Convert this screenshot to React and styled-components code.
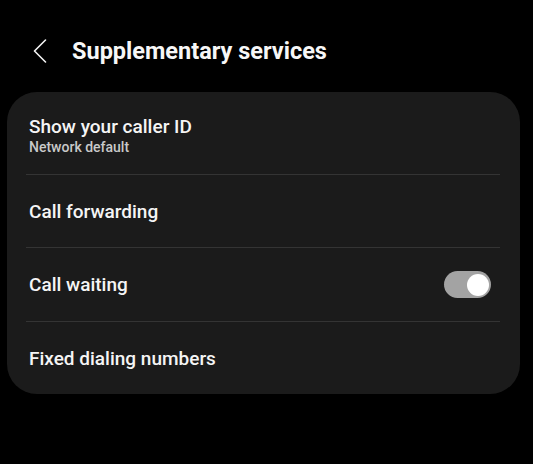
import React, { useState } from 'react'
import styled, { createGlobalStyle } from 'styled-components'

const GlobalStyle = createGlobalStyle`
    html, body {
        margin: 0;
        padding: 0;
        background: #000;
    }
    body {
        font-family: Roboto, 'Noto Sans', sans-serif;
        color: #f5f5f5;
    }
`;

const Screen = styled.div`
    width: 533px;
    height: 464px;
    background: #000;
    display: flex;
    flex-direction: column;
    padding: 0 13px 0 7px;
    box-sizing: border-box;
`;

const Header = styled.div`
    display: flex;
    align-items: center;
    height: 92px;
    padding: 10px 0 0 26px;
    box-sizing: border-box;
`;

const BackButton = styled.button`
    background: none;
    border: none;
    padding: 0;
    margin: 0 25px 0 0;
    display: flex;
    align-items: center;
    color: #f2f2f2;
`;

const Title = styled.h1`
    margin: 0;
    font-size: 23.5px;
    font-weight: 700;
    color: #f7f7f7;
`;

const Card = styled.div`
    background: #1b1b1b;
    border-radius: 30px;
    display: flex;
    flex-direction: column;
    padding: 0 20px 0 19px;
`;

const Row = styled.div`
    display: flex;
    align-items: center;
    justify-content: space-between;
    height: ${p => p.height || 73}px;
    border-top: ${p => (p.first ? 'none' : '1px solid #343434')};
    box-sizing: border-box;
    padding: 0 0 0 3px;
`;

const Texts = styled.div`
    display: flex;
    flex-direction: column;
    gap: 1px;
    padding-top: ${p => p.pad || 0}px;
`;

const Label = styled.span`
    font-size: 19px;
    font-weight: 500;
    color: #f5f5f5;
`;

const Sub = styled.span`
    font-size: 14px;
    font-weight: 500;
    color: #c9c9c9;
`;

const Track = styled.div`
    width: 47px;
    height: 27px;
    margin-right: 9px;
    border-radius: 14px;
    background: ${p => (p.on ? '#a3a3a3' : '#555')};
    display: flex;
    align-items: center;
    justify-content: ${p => (p.on ? 'flex-end' : 'flex-start')};
    padding: 0 2px;
    box-sizing: border-box;
    cursor: pointer;
`;

const Knob = styled.div`
    width: 22px;
    height: 22px;
    border-radius: 50%;
    background: #fff;
`;

const Chevron = () => (
    <svg width="14" height="24" viewBox="0 0 14 24" fill="none">
        <path d="M12.5 1 L1.5 12 L12.5 23" stroke="#f2f2f2" strokeWidth="1.6" strokeLinecap="round" strokeLinejoin="round" />
    </svg>
)

export default function App() {
    const [waiting, setWaiting] = useState(true)
    return (
        <>
            <GlobalStyle />
            <Screen>
                <Header>
                    <BackButton><Chevron /></BackButton>
                    <Title>Supplementary services</Title>
                </Header>
                <Card>
                    <Row first height={82}>
                        <Texts pad={4}>
                            <Label>Show your caller ID</Label>
                            <Sub>Network default</Sub>
                        </Texts>
                    </Row>
                    <Row>
                        <Label>Call forwarding</Label>
                    </Row>
                    <Row height={74}>
                        <Label>Call waiting</Label>
                        <Track on={waiting} onClick={() => setWaiting(!waiting)}>
                            <Knob />
                        </Track>
                    </Row>
                    <Row>
                        <Label>Fixed dialing numbers</Label>
                    </Row>
                </Card>
            </Screen>
        </>
    )
}
